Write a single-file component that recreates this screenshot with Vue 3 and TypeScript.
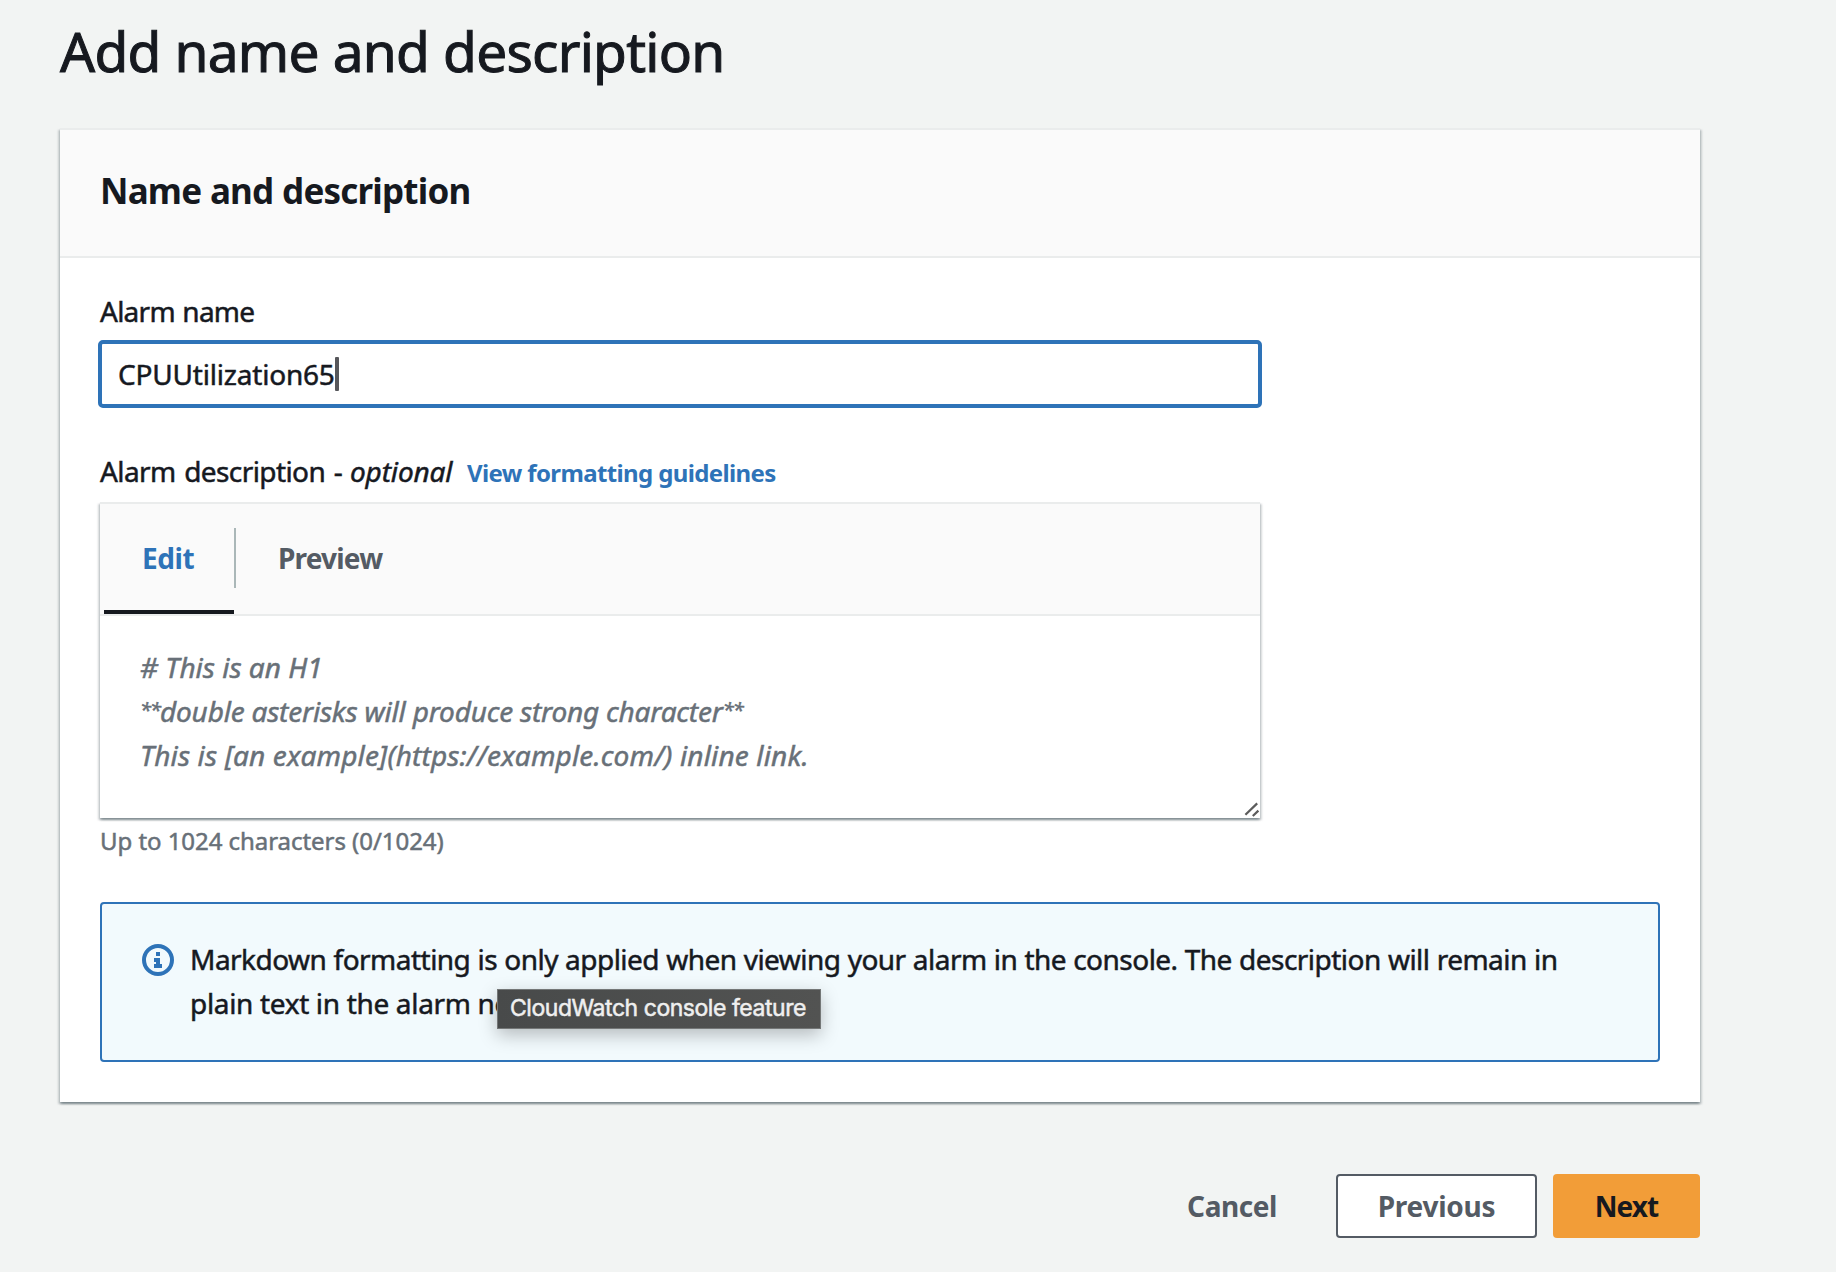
<script setup lang="ts">
import { ref } from 'vue'

const alarmName = ref('CPUUtilization65')
const activeTab = ref<'edit' | 'preview'>('edit')
</script>

<template>
  <main class="page">
    <h1 class="title">Add name and description</h1>

    <section class="panel">
      <header class="panel-header">
        <h2>Name and description</h2>
      </header>

      <div class="panel-body">
        <label class="label name-label">Alarm name</label>
        <div class="input">
          <span class="input-value">{{ alarmName }}</span><span class="caret"></span>
        </div>

        <div class="label desc-label">
          <span class="desc-text">Alarm description -</span>
          <em>optional</em>
          <a class="guide">View formatting guidelines</a>
        </div>

        <div class="editor">
          <div class="tabs">
            <button class="tab tab-edit" :class="{ active: activeTab === 'edit' }" @click="activeTab = 'edit'">Edit</button>
            <span class="divider"></span>
            <button class="tab tab-preview" :class="{ active: activeTab === 'preview' }" @click="activeTab = 'preview'">Preview</button>
          </div>
          <div class="editor-area">
            <div class="ph-heading"># This is an H1</div>
            <div class="ph-strong"><span class="stars">**</span>double asterisks will produce strong character<span class="stars">**</span></div>
            <div class="ph-link">This is [an example](https://example.com/) inline link.</div>
            <svg class="grip" width="16" height="16" viewBox="0 0 16 16">
              <path d="M1.4 13.8L13.2 2.4M8.8 15L14.4 9.6" fill="none" stroke="#5c5c5c" stroke-width="2.2" />
            </svg>
          </div>
        </div>
        <div class="hint">Up to 1024 characters (0/1024)</div>

        <div class="info">
          <svg class="info-icon" width="32" height="32" viewBox="0 0 32 32">
            <circle cx="16" cy="16" r="14" fill="none" stroke="#2e73b8" stroke-width="4" />
            <path d="M14 8h4v4h-4zM12 14h6v6h2v4h-8v-4h2v-2h-2z" fill="#2e73b8" />
          </svg>
          <div class="info-text">
            <div class="info-first">Markdown formatting is only applied when viewing your alarm in the console. The description will remain in</div>
            <div class="info-second">plain text in the alarm no</div>
          </div>
          <div class="tooltip">CloudWatch console feature</div>
        </div>
      </div>
    </section>

    <footer class="actions">
      <button class="btn cancel">Cancel</button>
      <button class="btn previous">Previous</button>
      <button class="btn next">Next</button>
    </footer>
  </main>
</template>

<style>
body {
  background: #f2f4f3;
}
</style>

<style scoped>
.page {
  box-sizing: border-box;
  width: 1836px;
  height: 1272px;
  padding: 18px 136px 0 60px;
  overflow: hidden;
  background: #f2f4f3;
  color: #16191f;
  font-family: "Noto Sans", "Open Sans", sans-serif;
  font-size: 28px;
  line-height: 44px;
  white-space: nowrap;
  -webkit-text-stroke: 0.5px currentColor;
}
.page * {
  box-sizing: border-box;
}
button {
  margin: 0;
  padding: 0;
  border: 0;
  background: none;
  font: inherit;
  color: inherit;
}
.title {
  margin: 0 0 44px;
  font-size: 55px;
  font-weight: 400;
  line-height: 66px;
  letter-spacing: -0.75px;
  word-spacing: 0.4px;
  -webkit-text-stroke-width: 1px;
}
.panel {
  height: 974px;
  border-top: 2px solid #eaecec;
  background: #fff;
  box-shadow: 0 2px 2px rgba(0, 28, 36, 0.3), 2px 2px 2px rgba(0, 28, 36, 0.15),
    -2px 2px 2px rgba(0, 28, 36, 0.15);
}
.panel-header {
  height: 128px;
  padding: 39px 40px 0;
  border-bottom: 2px solid #eaecec;
  background: #fafafa;
}
.panel-header h2 {
  margin: 0;
  font-size: 35px;
  font-weight: 700;
  letter-spacing: -0.8px;
  word-spacing: 0.4px;
  line-height: 44px;
  -webkit-text-stroke-width: 0;
}
.panel-body {
  padding: 31px 40px 0;
}
.label {
  display: block;
}
.name-label {
  letter-spacing: -0.75px;
  word-spacing: 1px;
}
.input {
  display: flex;
  align-items: center;
  width: 1164px;
  height: 68px;
  margin: 7px 0 0 -2px;
  padding-left: 16px;
  border: 4px solid #2e73b8;
  border-radius: 5px;
  background: #fff;
}
.input-value {
  letter-spacing: -0.2px;
}
.caret {
  width: 4px;
  height: 34px;
  margin-left: 0;
  border-radius: 1px;
  background: #56575b;
}
.desc-label {
  display: flex;
  align-items: baseline;
  height: 44px;
  margin-top: 41px;
}
.desc-text {
  width: 250px;
  letter-spacing: -0.6px;
  word-spacing: 2px;
}
.desc-label em {
  width: 117px;
  letter-spacing: -0.15px;
}
.guide {
  color: #2e73b8;
  font-size: 24px;
  font-weight: 700;
  letter-spacing: -0.63px;
  -webkit-text-stroke-width: 0;
}
.editor {
  width: 1160px;
  height: 316px;
  margin-top: 9px;
  border-top: 2px solid #eaecec;
  background: #fff;
  box-shadow: 0 2px 2px rgba(0, 28, 36, 0.3), 2px 2px 2px rgba(0, 28, 36, 0.15),
    -2px 2px 2px rgba(0, 28, 36, 0.15);
}
.tabs {
  display: flex;
  height: 112px;
  padding-left: 4px;
  border-bottom: 2px solid #eaecec;
  background: #fafafa;
}
.tab {
  height: 110px;
  padding-top: 1px;
  border-bottom: 4px solid transparent;
  color: #545b64;
  font-weight: 700;
  text-align: left;
  -webkit-text-stroke-width: 0;
}
.tab.active {
  border-bottom-color: #16191f;
  color: #2e73b8;
}
.tab-edit {
  width: 130px;
  padding-left: 38px;
  letter-spacing: -0.4px;
}
.tab.active.tab-edit {
  color: #2e73b8;
}
.divider {
  width: 2px;
  height: 60px;
  margin-top: 24px;
  background: #aab7b8;
}
.tab-preview {
  padding-left: 42px;
  letter-spacing: -0.8px;
}
.editor-area {
  position: relative;
  height: 202px;
  padding: 29px 40px 0;
  color: #687078;
  font-style: italic;
}
.ph-strong {
  letter-spacing: -0.2px;
}
.stars {
  font-size: 20px;
  line-height: 0;
  letter-spacing: -1px;
  vertical-align: 5px;
}
.ph-link {
  letter-spacing: 0.15px;
}
.grip {
  position: absolute;
  right: 0;
  bottom: 1px;
}
.hint {
  margin-top: 7px;
  color: #687078;
  font-size: 24px;
  line-height: 32px;
  letter-spacing: -0.05px;
}
.info {
  position: relative;
  display: flex;
  height: 160px;
  margin-top: 45px;
  padding: 33px 40px 0;
  border: 2px solid #2e73b8;
  border-radius: 4px;
  background: #f2fafd;
}
.info-icon {
  flex: none;
  margin: 7px 16px 0 0;
}
.info-first {
  letter-spacing: -0.52px;
  word-spacing: 0.4px;
}
.info-second {
  letter-spacing: -0.33px;
}
.tooltip {
  position: absolute;
  left: 395px;
  top: 85px;
  width: 324px;
  height: 40px;
  padding-left: 12px;
  border: 1.5px solid #747777;
  background: linear-gradient(90deg, #484a4a, #525352);
  box-shadow: 0 6px 18px rgba(0, 0, 0, 0.25);
  color: #efefef;
  font-family: Inter, "Liberation Sans", sans-serif;
  font-size: 23px;
  line-height: 36px;
  letter-spacing: -0.46px;
}
.actions {
  display: flex;
  justify-content: flex-end;
  align-items: center;
  margin-top: 72px;
  width: 1640px;
}
.btn {
  height: 64px;
  border-radius: 4px;
  font-weight: 700;
  text-align: center;
  -webkit-text-stroke-width: 0;
}
.cancel {
  width: 90px;
  margin-right: 59px;
  color: #545b64;
  letter-spacing: -0.45px;
}
.previous {
  width: 201px;
  margin-right: 16px;
  border: 2px solid #545b64;
  background: #fff;
  color: #545b64;
  letter-spacing: -0.25px;
}
.next {
  width: 147px;
  background: #f29d38;
  letter-spacing: -1px;
}
</style>
